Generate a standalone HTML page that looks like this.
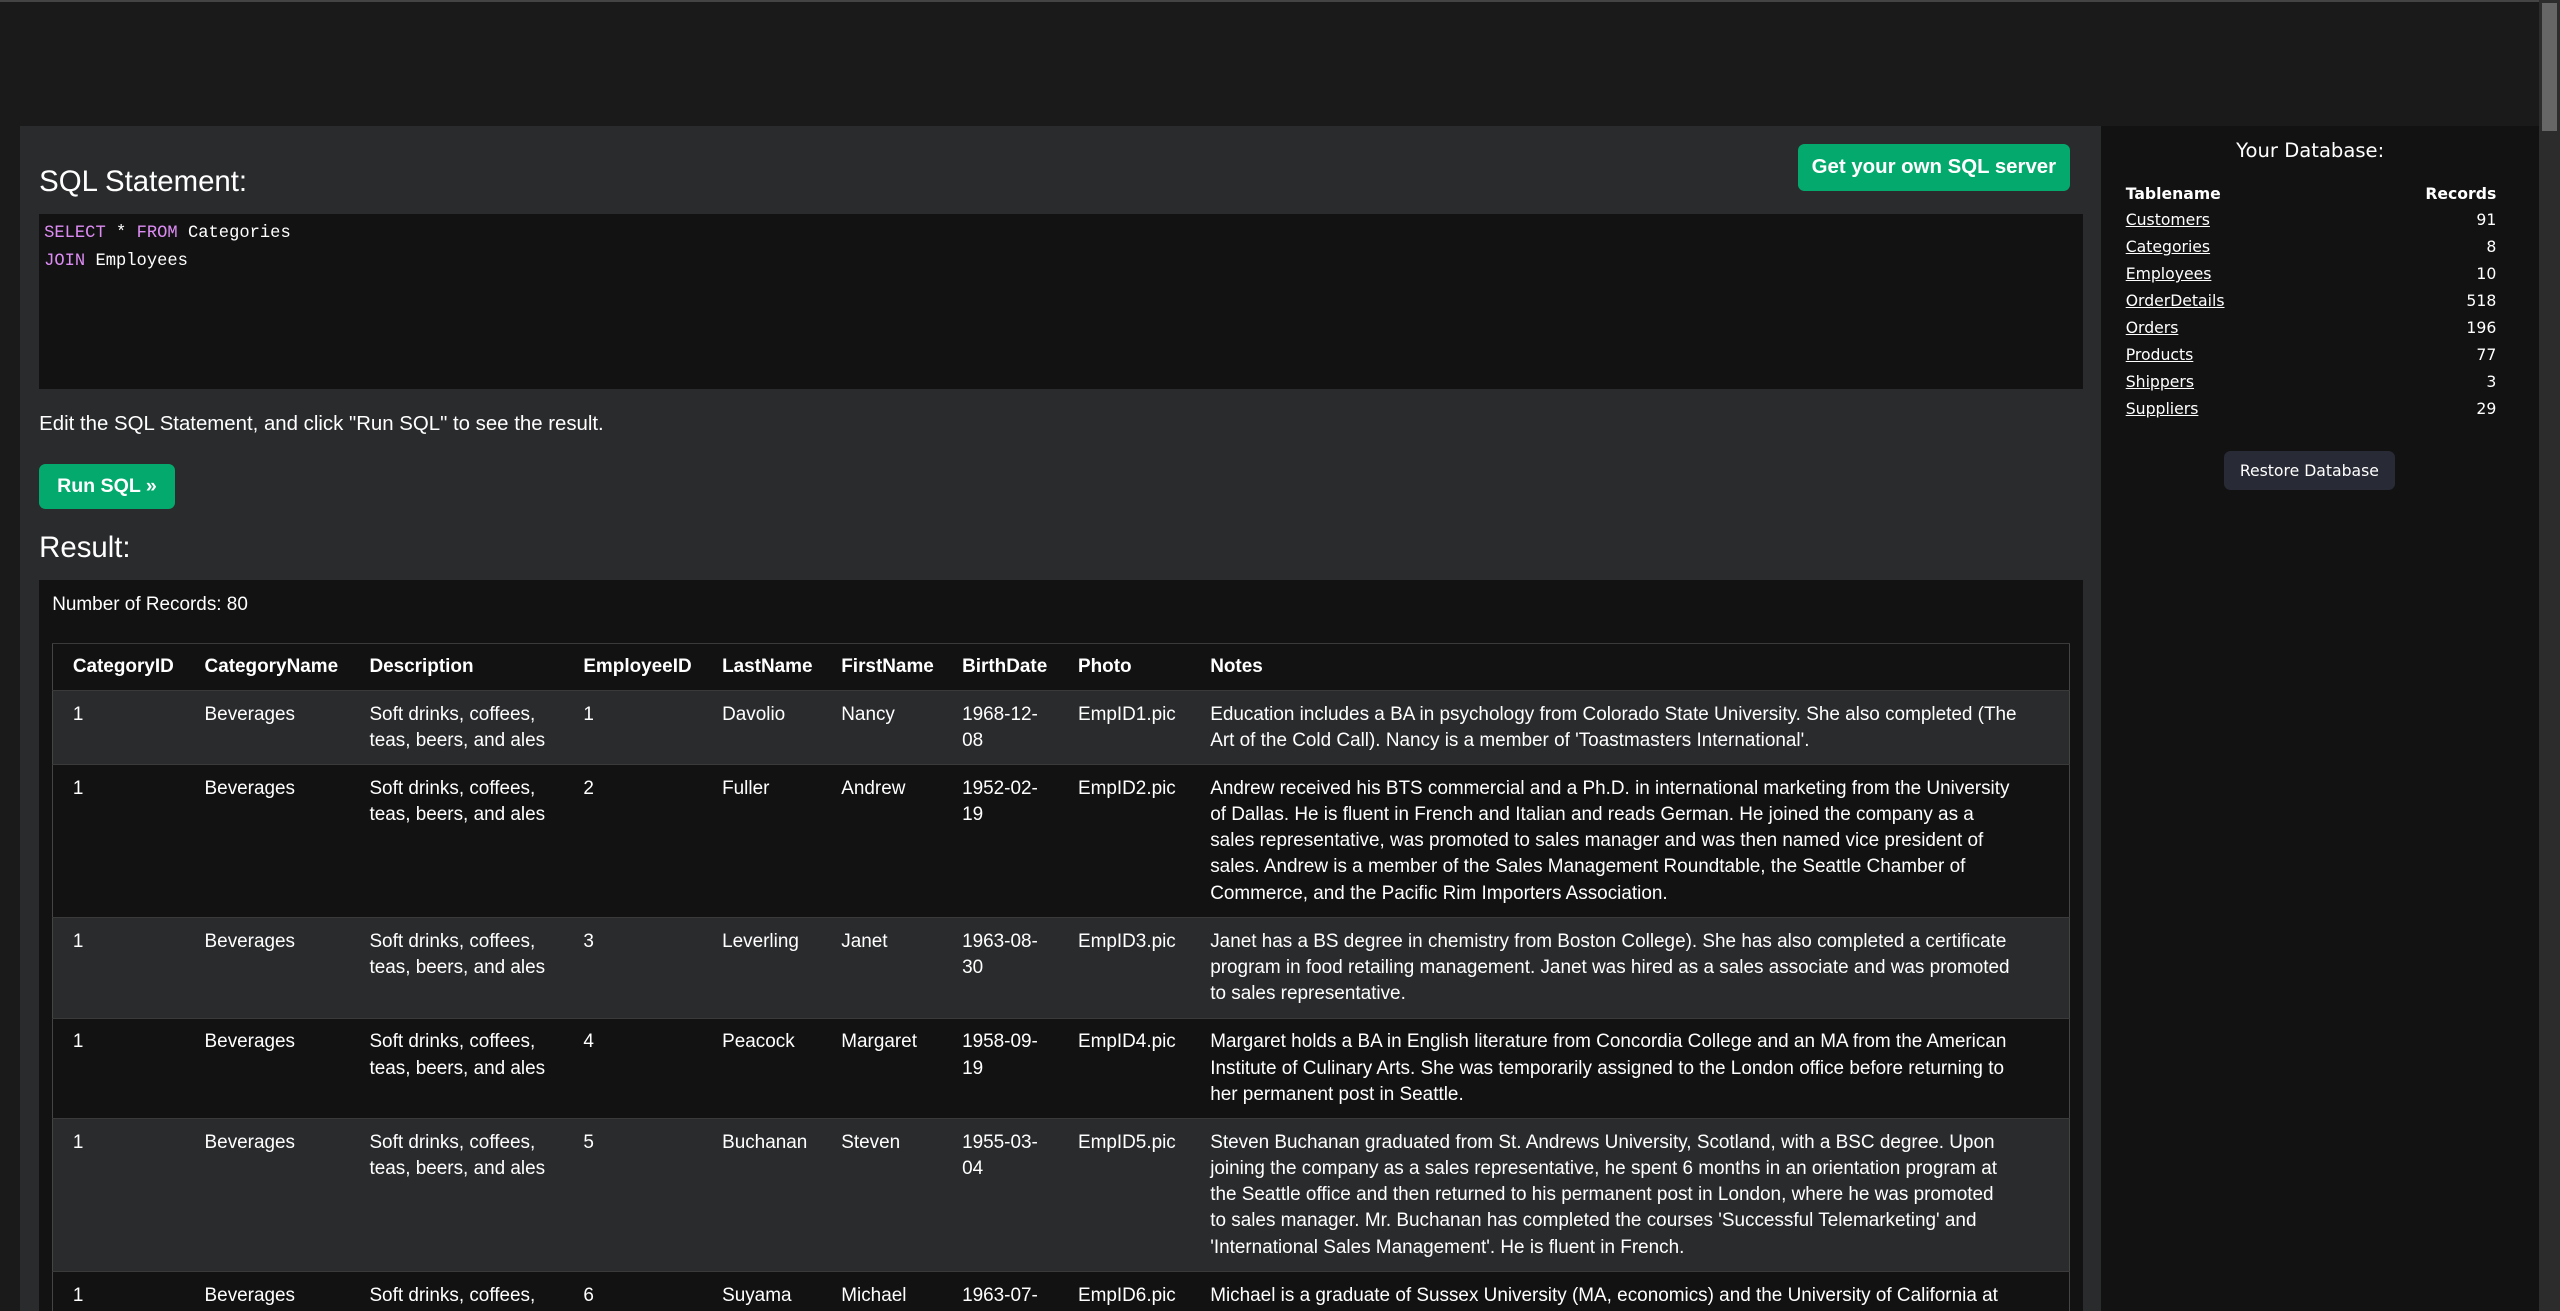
<!DOCTYPE html>
<html><head><meta charset="utf-8"><style>
html,body{margin:0;padding:0;background:#1a1a1a;overflow:hidden;width:2560px;height:1311px}
#w{zoom:1.632653;width:1568px;height:803px;position:relative;font-family:"Liberation Sans",sans-serif;color:#fff;overflow:hidden}
.abs{position:absolute}
#left{left:12px;top:77px;width:1275px;height:740px;background:#2a2b2d}
#right{left:1287px;top:77px;width:268px;height:740px;background:#121212}
#sb{left:1555px;top:0;width:13px;height:803px;background:#2c2c2c}
#thumb{left:1557px;top:2px;width:9px;height:78px;background:#666}
h2{font-weight:normal;font-size:18px;margin:0}
.btn{background:#04aa6d;border-radius:4px;color:#fff;font-weight:bold;font-size:12.5px;display:flex;align-items:center;justify-content:center}
#ta{left:24px;top:131px;width:1252px;height:107px;background:#121212;font-family:"Liberation Mono",monospace;font-size:10.5px;line-height:17px;padding:4px 3px;box-sizing:border-box}
.kw{color:#dd8cf3}
#res{left:24px;top:355px;width:1252px;height:460px;background:#121212}
table.r{position:absolute;left:32px;top:394px;width:1236px;border-collapse:collapse;font-size:11.6px;line-height:16px;border:1px solid #444}
table.r th{text-align:left;font-weight:bold;height:28px;padding:0 0 0 8px;vertical-align:middle}
table.r td{vertical-align:top;padding:6.5px 0 6.5px 8px;white-space:nowrap}
table.r tr.o td{background:#2a2b2d}
table.r tr{border-top:1px solid #3a3a3a}
table.r th:first-child,table.r td:first-child{padding-left:12px}
.db{font-family:"DejaVu Sans",sans-serif;font-size:9.6px}
.db td{padding:0;height:16.5px}
.db a{color:#fff;text-decoration:underline}
</style></head><body><div id="w">
<div class="abs" style="left:0;top:0;width:1555px;height:1px;background:#444"></div>
<div id="left" class="abs"></div>
<div id="right" class="abs"></div>
<div id="sb" class="abs"></div><div id="thumb" class="abs"></div>
<h2 class="abs" style="left:24px;top:101px">SQL Statement:</h2>
<div class="abs btn" style="left:1101px;top:88px;width:167px;height:29px">Get your own SQL server</div>
<div id="ta" class="abs"><span class="kw">SELECT</span> * <span class="kw">FROM</span> Categories<br><span class="kw">JOIN</span> Employees</div>
<div class="abs" style="left:24px;top:253px;font-size:12.5px">Edit the SQL Statement, and click "Run SQL" to see the result.</div>
<div class="abs btn" style="left:24px;top:284px;width:83px;height:28px;font-size:12px">Run SQL »</div>
<h2 class="abs" style="left:24px;top:325px">Result:</h2>
<div id="res" class="abs"></div>
<div class="abs" style="left:32px;top:364px;font-size:11.6px">Number of Records: 80</div>
<table class="r">
<colgroup><col style="width:85px"><col style="width:101px"><col style="width:131px"><col style="width:85px"><col style="width:73px"><col style="width:74px"><col style="width:71px"><col style="width:81px"><col></colgroup>
<tr><th>CategoryID</th><th>CategoryName</th><th>Description</th><th>EmployeeID</th><th>LastName</th><th>FirstName</th><th>BirthDate</th><th>Photo</th><th>Notes</th></tr>
<tr class="o"><td>1</td><td>Beverages</td><td>Soft drinks, coffees,<br>teas, beers, and ales</td><td>1</td><td>Davolio</td><td>Nancy</td><td>1968-12-<br>08</td><td>EmpID1.pic</td><td>Education includes a BA in psychology from Colorado State University. She also completed (The<br>Art of the Cold Call). Nancy is a member of 'Toastmasters International'.</td></tr>
<tr><td>1</td><td>Beverages</td><td>Soft drinks, coffees,<br>teas, beers, and ales</td><td>2</td><td>Fuller</td><td>Andrew</td><td>1952-02-<br>19</td><td>EmpID2.pic</td><td>Andrew received his BTS commercial and a Ph.D. in international marketing from the University<br>of Dallas. He is fluent in French and Italian and reads German. He joined the company as a<br>sales representative, was promoted to sales manager and was then named vice president of<br>sales. Andrew is a member of the Sales Management Roundtable, the Seattle Chamber of<br>Commerce, and the Pacific Rim Importers Association.</td></tr>
<tr class="o"><td>1</td><td>Beverages</td><td>Soft drinks, coffees,<br>teas, beers, and ales</td><td>3</td><td>Leverling</td><td>Janet</td><td>1963-08-<br>30</td><td>EmpID3.pic</td><td>Janet has a BS degree in chemistry from Boston College). She has also completed a certificate<br>program in food retailing management. Janet was hired as a sales associate and was promoted<br>to sales representative.</td></tr>
<tr><td>1</td><td>Beverages</td><td>Soft drinks, coffees,<br>teas, beers, and ales</td><td>4</td><td>Peacock</td><td>Margaret</td><td>1958-09-<br>19</td><td>EmpID4.pic</td><td>Margaret holds a BA in English literature from Concordia College and an MA from the American<br>Institute of Culinary Arts. She was temporarily assigned to the London office before returning to<br>her permanent post in Seattle.</td></tr>
<tr class="o"><td>1</td><td>Beverages</td><td>Soft drinks, coffees,<br>teas, beers, and ales</td><td>5</td><td>Buchanan</td><td>Steven</td><td>1955-03-<br>04</td><td>EmpID5.pic</td><td>Steven Buchanan graduated from St. Andrews University, Scotland, with a BSC degree. Upon<br>joining the company as a sales representative, he spent 6 months in an orientation program at<br>the Seattle office and then returned to his permanent post in London, where he was promoted<br>to sales manager. Mr. Buchanan has completed the courses 'Successful Telemarketing' and<br>'International Sales Management'. He is fluent in French.</td></tr>
<tr><td>1</td><td>Beverages</td><td>Soft drinks, coffees,<br>teas, beers, and ales</td><td>6</td><td>Suyama</td><td>Michael</td><td>1963-07-<br>02</td><td>EmpID6.pic</td><td>Michael is a graduate of Sussex University (MA, economics) and the University of California at<br>Los Angeles (MBA, marketing).</td></tr>
</table>
<div class="abs" style="left:1287px;top:85px;width:256px;text-align:center;font-family:'DejaVu Sans',sans-serif;font-size:12px">Your Database:</div>
<table class="abs db" style="left:1302px;top:110px;width:227px;border-collapse:collapse">
<tr><td><b>Tablename</b></td><td style="text-align:right"><b>Records</b></td></tr>
<tr><td><a>Customers</a></td><td align="right">91</td></tr>
<tr><td><a>Categories</a></td><td align="right">8</td></tr>
<tr><td><a>Employees</a></td><td align="right">10</td></tr>
<tr><td><a>OrderDetails</a></td><td align="right">518</td></tr>
<tr><td><a>Orders</a></td><td align="right">196</td></tr>
<tr><td><a>Products</a></td><td align="right">77</td></tr>
<tr><td><a>Shippers</a></td><td align="right">3</td></tr>
<tr><td><a>Suppliers</a></td><td align="right">29</td></tr>
</table>
<div class="abs" style="left:1362px;top:276px;width:105px;height:24px;background:#282a35;border-radius:4px;font-family:'DejaVu Sans',sans-serif;font-size:9.6px;display:flex;align-items:center;justify-content:center">Restore Database</div>
</div></body></html>
